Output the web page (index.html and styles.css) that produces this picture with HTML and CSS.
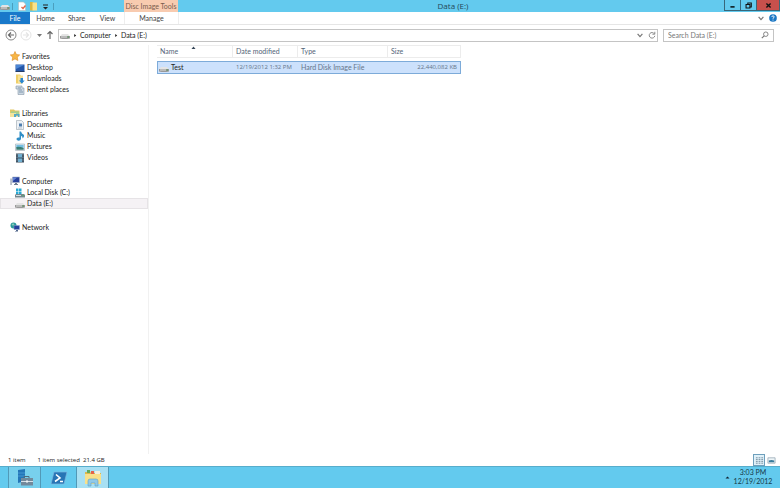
FILE: index.html
```html
<!DOCTYPE html>
<html lang="en">
<head>
<meta charset="utf-8">
<title>Data (E:)</title>
<link rel="stylesheet" href="styles.css">
</head>
<body>
<svg class="defs" aria-hidden="true">
  <symbol id="drive" viewBox="0 0 10 10"><path d="M2 4h6l2 2.500H0z" fill="#e4e4e4"/><path d="M0 6h10v2.500q-5 1-10 0z" fill="#999"/><path d="M1 6.500h6v1H1z" fill="#ddd"/><path d="M7.500 6.500h1.500v1h-1.500z" fill="#4a9a50"/></symbol>
  <symbol id="star" viewBox="0 0 10 10"><path d="M5 .5l1.400 3 3.300.4-2.400 2.300.6 3.300L5 7.900 2.100 9.500l.6-3.300L.3 3.900l3.300-.4z" fill="#f7b646" stroke="#dc8b27" stroke-width=".6"/></symbol>
  <symbol id="desktop" viewBox="0 0 10 10"><path d="M.5 1.500h9v7h-9z" fill="#2456a8"/><path d="M1 2h8L1 6z" fill="#4c87d6"/><path d="M.5 8h9v1h-9z" fill="#253c65"/></symbol>
  <symbol id="downloads" viewBox="0 0 10 10"><path d="M1 .5h4l1 1v8H1z" fill="#f0cf68"/><path d="M3 1.500h5v8H3z" fill="#f8e298"/><path d="M5.500 4h2.500v2.500h1.700L6.800 9.700 4 6.500h1.500z" fill="#2a86cf"/></symbol>
  <symbol id="recent" viewBox="0 0 10 10"><path d="M1 1h6v2h2v6.500H3V4H1z" fill="#cbd7e2" stroke="#8797a7" stroke-width=".6"/><path d="M3 3h3M4 5h3M4 7h4" stroke="#667e98" stroke-width=".7"/></symbol>
  <symbol id="libraries" viewBox="0 0 10 10"><path d="M0 1.500h4l1 1h4.500v6H0z" fill="#e1c866"/><path d="M1 3.500h8v3H1z" fill="#a5cf93"/><path d="M0 5h6v4H0z" fill="#f5e49c"/><path d="M4 9V6h5.500v3H8V7.500H6V9z" fill="#55a9ca"/></symbol>
  <symbol id="documents" viewBox="0 0 10 10"><path d="M1.500.5h5l2 2v7h-7z" fill="#edf1f5" stroke="#98a4ad" stroke-width=".6"/><path d="M4 3.500h3v3H4z" fill="#4f7eae"/><path d="M3 8h4" stroke="#91a3b4" stroke-width=".6"/></symbol>
  <symbol id="music" viewBox="0 0 10 10"><path d="M4.500.5h1.500Q6.500 2.500 9 4 9.500 6.500 7.500 7.500q.5-2-1.500-2.700V8Q5.500 9.800 3.500 9.700 1 9.200 1.500 7.500 2.500 6 4.500 6.500z" fill="#318fc7"/></symbol>
  <symbol id="pictures" viewBox="0 0 10 10"><path d="M.5 2h9v6.500h-9z" fill="#f3f6f7" stroke="#98a8b1" stroke-width=".6"/><path d="M1.300 2.800h7.400v3H1.300z" fill="#75bfe2"/><path d="M1.300 5q3-1 7.400 1v1.800H1.300z" fill="#397d72"/></symbol>
  <symbol id="videos" viewBox="0 0 10 10"><path d="M1 .5h8v9H1z" fill="#384c5d"/><path d="M3 1h4v3.500H3zM3 5.500h4V9H3z" fill="#70afd1"/><path d="M2 1v8M8 1v8" stroke="#c3cdd4" stroke-width=".7" stroke-dasharray=".8 .8"/></symbol>
  <symbol id="computer" viewBox="0 0 10 10"><path d="M.3 2.500h1.500V9H.3z" fill="#a4aebc"/><path d="M2.500 1h7v5.500h-7z" fill="#263f9b" stroke="#a6b2c8" stroke-width=".6"/><path d="M3 1.500h4L3 5z" fill="#6585d6"/><path d="M5 7h2v1h1v1H4V8h1z" fill="#6f7d90"/></symbol>
  <symbol id="sysdrive" viewBox="0 0 10 10"><path d="M1 .5h2.500V3H1zM4 .5h2.500V3H4zM1 3.500h2.500V6H1zM4 3.500h2.500V6H4z" fill="#27a9d4"/><path d="M1 6h8l1 1v2.500H0V7z" fill="#75878f"/><path d="M1 7h5v1H1z" fill="#d4dfe2"/><path d="M7.500 7h1.500v1h-1.500z" fill="#5ab260"/></symbol>
  <symbol id="network" viewBox="0 0 10 10"><circle cx="3.500" cy="3.500" r="3" fill="#2b9a9b"/><path d="M1.500 2q2-1 3 0L3 4z" fill="#8bd0bb"/><path d="M4 3.500h5.500v4H4z" fill="#243f9c" stroke="#8fa3ca" stroke-width=".5"/><path d="M6 8h2v1.500H5V9h1z" fill="#52688c"/></symbol>
  <symbol id="down" viewBox="0 0 10 10"><path d="M2 3.500l3 3.500 3-3.500" fill="none" stroke="#777" stroke-width="1.500"/></symbol>
  <symbol id="right" viewBox="0 0 10 10"><path d="M3 1l5 4-5 4z" fill="#222"/></symbol>
</svg>

<div class="window">
  <header class="titlebar">
    <div class="quick">
      <svg class="icon"><use href="#drive"/></svg>
      <span class="rule"></span>
      <button aria-label="Properties"><svg class="icon" viewBox="0 0 10 10"><path d="M1.500 1h5l2 2v6.500h-7z" fill="#fff" stroke="#b0b9be" stroke-width=".6"/><path d="M4.500 6l1.500 1.500L8.500 4.500" fill="none" stroke="#e1684a" stroke-width="1.400"/></svg></button>
      <button aria-label="New folder"><svg class="icon" viewBox="0 0 10 10"><path d="M1 1h3l1 1v7.500H1z" fill="#d9b843"/><path d="M3.500 1.500h4.500v8H3.500z" fill="#fae28a"/></svg></button>
      <button aria-label="Customize toolbar"><svg class="icon" viewBox="0 0 10 10"><path d="M2 3.500h5v1H2zM2 6h5L4.500 8.500z" fill="#222"/></svg></button>
      <span class="rule"></span>
    </div>
    <div class="context">Disc Image Tools</div>
    <h1>Data (E:)</h1>
    <div class="controls">
      <button aria-label="Minimize"><svg viewBox="0 0 10 10"><path d="M2 6h6v2H2z"/></svg></button>
      <button aria-label="Restore"><svg viewBox="0 0 10 10"><path d="M4 3V1.500h5V7H7M1.500 3.500H7v5H1.500z" fill="none" stroke="#111" stroke-width="1.500"/></svg></button>
      <button class="close" aria-label="Close"><svg viewBox="0 0 10 10"><path d="M2 2l6 6M8 2L2 8" stroke="#111" stroke-width="2"/></svg></button>
    </div>
  </header>

  <nav class="tabs" aria-label="Ribbon">
    <button class="file">File</button>
    <button>Home</button>
    <button>Share</button>
    <button>View</button>
    <button class="manage">Manage</button>
    <span class="grow"></span>
    <button class="mini" aria-label="Expand ribbon"><svg class="glyph"><use href="#down"/></svg></button>
    <button class="mini" aria-label="Help"><svg class="help" viewBox="0 0 10 10"><circle cx="5" cy="5" r="4.800" fill="#1c78c4"/><path d="M3.500 3.800Q3.600 2.300 5 2.300T6.500 3.700Q6.500 4.500 5 5.300V6M5 7v1.200" fill="none" stroke="#fff" stroke-width="1.100"/></svg></button>
  </nav>

  <div class="addressbar">
    <button class="arrow" aria-label="Back"><svg viewBox="0 0 12 12"><circle cx="6" cy="6" r="5" fill="#fff" stroke="#888"/><path d="M9 6H3.500M6 3.500L3.500 6 6 8.500" fill="none" stroke="#666" stroke-width="1.200"/></svg></button>
    <button class="arrow forward" aria-label="Forward"><svg viewBox="0 0 12 12"><circle cx="6" cy="6" r="5" fill="#fff" stroke="#e4e4e4"/><path d="M3 6h5.500M6 3.500L8.500 6 6 8.500" fill="none" stroke="#e4e4e4" stroke-width="1.200"/></svg></button>
    <button class="arrow slim" aria-label="Recent locations"><svg viewBox="0 0 12 12"><path d="M4 5h5L6.500 8z" fill="#777"/></svg></button>
    <button class="arrow" aria-label="Up"><svg viewBox="0 0 12 12"><path d="M6 10V2.500M3.500 5L6 2.500 8.500 5" fill="none" stroke="#666" stroke-width="1.200"/></svg></button>
    <div class="path">
      <svg class="icon"><use href="#drive"/></svg>
      <svg class="chevron"><use href="#right"/></svg>
      <a href="#computer">Computer</a>
      <svg class="chevron"><use href="#right"/></svg>
      <a href="#data">Data (E:)</a>
      <span class="grow"></span>
      <button class="mini" aria-label="Previous locations"><svg class="glyph"><use href="#down"/></svg></button>
      <button class="mini" aria-label="Refresh"><svg class="glyph" viewBox="0 0 10 10"><path d="M8 3.500A3.500 3.500 0 1 0 8.500 6M8.500 1v3h-3" fill="none" stroke="#888" stroke-width="1.200"/></svg></button>
    </div>
    <div class="search">
      <input type="search" aria-label="Search Data (E:)" placeholder="Search Data (E:)">
      <svg class="glyph" viewBox="0 0 10 10"><circle cx="6" cy="4" r="2.800" fill="none" stroke="#777" stroke-width="1.100"/><path d="M4 6L1 9" stroke="#777" stroke-width="1.400"/></svg>
    </div>
  </div>

  <div class="body">
    <nav class="tree" aria-label="Folders">
      <section>
        <a class="head" href="#fav"><svg class="icon"><use href="#star"/></svg>Favorites</a>
        <a href="#desk"><svg class="icon"><use href="#desktop"/></svg>Desktop</a>
        <a href="#down"><svg class="icon"><use href="#downloads"/></svg>Downloads</a>
        <a href="#rec"><svg class="icon"><use href="#recent"/></svg>Recent places</a>
      </section>
      <section>
        <a class="head" href="#lib"><svg class="icon"><use href="#libraries"/></svg>Libraries</a>
        <a href="#doc"><svg class="icon"><use href="#documents"/></svg>Documents</a>
        <a href="#mus"><svg class="icon"><use href="#music"/></svg>Music</a>
        <a href="#pic"><svg class="icon"><use href="#pictures"/></svg>Pictures</a>
        <a href="#vid"><svg class="icon"><use href="#videos"/></svg>Videos</a>
      </section>
      <section>
        <a class="head" href="#comp"><svg class="icon"><use href="#computer"/></svg>Computer</a>
        <a href="#c"><svg class="icon"><use href="#sysdrive"/></svg>Local Disk (C:)</a>
        <a class="current" href="#e"><svg class="icon"><use href="#drive"/></svg>Data (E:)</a>
      </section>
      <section>
        <a class="head" href="#net"><svg class="icon"><use href="#network"/></svg>Network</a>
      </section>
    </nav>
    <main>
      <table>
        <colgroup><col class="c-name"><col class="c-date"><col class="c-type"><col class="c-size"></colgroup>
        <thead><tr><th class="sorted">Name<svg class="sort" viewBox="0 0 10 6"><path d="M1 6l4-5 4 5z" fill="#345"/></svg></th><th>Date modified</th><th>Type</th><th>Size</th></tr></thead>
        <tbody><tr><td class="name"><div><svg class="icon"><use href="#drive"/></svg>Test</div></td><td class="num">12/19/2012 1:32 PM</td><td>Hard Disk Image File</td><td class="num size">22,440,082 KB</td></tr></tbody>
      </table>
    </main>
  </div>

  <footer class="status">
    <span>1 item</span><span>1 item selected&nbsp; 21.4 GB</span>
    <span class="grow"></span>
    <button class="view on" aria-label="Details view"><svg viewBox="0 0 10 10"><path d="M1 2h2M1 4h2M1 6h2M1 8h2M4 2h2M4 4h2M4 6h2M4 8h2M7 2h2M7 4h2M7 6h2M7 8h2" stroke="#71899b" stroke-width="1"/></svg></button>
    <button class="view" aria-label="Large icons view"><svg viewBox="0 0 10 10"><path d="M1 2h8v6H1z" fill="#eef5f8" stroke="#8ea2ae" stroke-width=".8"/><path d="M2 5q3-1 6 0v2H2z" fill="#397c9b"/></svg></button>
  </footer>
</div>

<div class="taskbar">
  <button class="task" aria-label="Server Manager"><svg viewBox="0 0 18 18"><path d="M2 1l7-1v12l-7 2z" fill="#2376b8"/><path d="M2 4h7M2 7h7" stroke="#55a6dc" stroke-width=".7"/><path d="M8 9V7.500h5V9" fill="none" stroke="#4f6a7d"/><path d="M5 9h12v7.500H5z" fill="#72899b"/><path d="M5 12.500h12" stroke="#d5e1e8"/><path d="M10 11.500h2v2h-2z" fill="#eef3f6"/></svg></button>
  <button class="task plain" aria-label="PowerShell"><svg viewBox="0 0 18 18"><path d="M4 3h13l-3 12H1z" fill="#2775b5" stroke="#7db8df" stroke-width=".7"/><path d="M6 5.500L10 9l-5 3.500M10 12.500h3" fill="none" stroke="#fff" stroke-width="1.600"/></svg></button>
  <button class="task active" aria-label="File Explorer"><svg viewBox="0 0 18 18"><path d="M1 3h5l1 1h10v11H1z" fill="#dcb84f"/><path d="M3 1h3v3H3z" fill="#62a95c"/><path d="M7 2h3v3H7z" fill="#e4624a"/><path d="M11 2h5v3h-5z" fill="#f3efe0"/><path d="M1 5h16v10H1z" fill="#f8e08b"/><path d="M4 17v-5q0-2 2-2h6q2 0 2 2v5h-3v-3H7v3z" fill="#8fc9e8" stroke="#5b9fc7" stroke-width=".6"/></svg></button>
  <span class="grow"></span>
  <button class="tray" aria-label="Show hidden icons"><svg viewBox="0 0 10 10"><path d="M1 7l4-4 4 4z" fill="#123"/></svg></button>
  <time datetime="2012-12-19T15:03">3:03 PM<br>12/19/2012</time>
</div>
</body>
</html>
```
FILE: styles.css
```css
* { box-sizing: border-box; }
body {
  margin: 0;
  min-height: 100vh;
  display: flex;
  flex-direction: column;
  background: #fff;
  color: #222;
  font: 7px/11px Lato, "Open Sans", sans-serif;
}
button {
  display: flex;
  align-items: center;
  justify-content: center;
  padding: 0;
  border: 0;
  background: none;
  color: inherit;
  font: inherit;
}
a { color: inherit; text-decoration: none; }
svg { display: block; flex: none; }
.defs { position: absolute; width: 0; height: 0; }
.icon { width: 10px; height: 10px; }
.glyph { width: 8px; height: 8px; }
.grow { flex: 1; }
.window { flex: 1; display: flex; flex-direction: column; }

.titlebar {
  display: grid;
  grid-template-columns: 124px 54px 1fr 56px;
  height: 12px;
  background: #63caee;
}
.quick { display: flex; align-items: center; gap: 2px; }
.quick .rule { width: 1px; height: 7px; background: #4b9fbe; }
.quick .rule:first-of-type { margin-right: 2px; }
.context {
  background: #f8cbb0;
  color: #795c4e;
  line-height: 12px;
  text-align: center;
  white-space: nowrap;
}
h1 {
  margin: 0;
  padding-left: 4px;
  color: #234958;
  font: 8px/12px "Open Sans", sans-serif;
  text-align: center;
}
.controls { display: flex; height: 11px; border: 1px solid #38677a; border-top: 0; }
.controls button { width: 16px; border-right: 1px solid #38677a; }
.controls .close { flex: 1; border: 0; background: #c7504c; }
.controls svg { width: 7px; height: 7px; }

.tabs {
  display: flex;
  height: 13px;
  padding-right: 1px;
  border-bottom: 1px solid #e6e6e6;
  color: #444;
}
.tabs button { width: 31px; }
.tabs .file { width: 30px; background: #1979ca; color: #fff; }
.tabs .manage {
  width: 55px;
  margin-left: 1px;
  border: 1px solid #eee;
  border-width: 0 1px;
}
.tabs .mini { width: 12px; }
.help { width: 8px; height: 8px; }

.addressbar {
  display: flex;
  align-items: center;
  height: 20px;
  padding: 0 6px 0 4px;
}
.arrow { width: 13px; }
.arrow.forward { width: 18px; }
.arrow.slim { width: 8px; }
.arrow svg { width: 12px; height: 12px; }
.path, .search {
  display: flex;
  align-items: center;
  height: 13px;
  border: 1px solid #c4c4c4;
}
.path { flex: 1; margin: 0 5px 0 2px; padding: 0 1px; gap: 3px; }
.path .mini { width: 9px; }
.chevron { width: 4px; height: 5px; }
.search { width: 111px; padding: 0 4px; }
.search input {
  flex: 1;
  min-width: 0;
  padding: 0;
  border: 0;
  outline: 0;
  background: none;
  font: inherit;
}
.search input::placeholder { color: #777; opacity: 1; }

.body { flex: 1; display: grid; grid-template-columns: 149px 1fr; }
.tree { padding-top: 5px; border-right: 1px solid #f1f1f1; }
.tree section { margin-bottom: 12px; }
.tree a {
  display: flex;
  align-items: center;
  gap: 2px;
  height: 11px;
  padding-left: 15px;
}
.tree .head { height: 12px; padding-left: 10px; }
.tree .current { background: #f5f2f5; outline: 1px solid #e6e3e6; outline-offset: -1px; }

main { padding-left: 8px; }
table {
  width: 304px;
  border-spacing: 0;
  table-layout: fixed;
  line-height: 11px;
}
.c-name { width: 76px; }
.c-date { width: 65px; }
.c-type { width: 90px; }
.c-size { width: 73px; }
th, td { height: 13px; padding: 0 3px; font-weight: 400; text-align: left; white-space: nowrap; }
th {
  position: relative;
  border: 1px solid #ececec;
  border-width: 1px 1px 1px 0;
  color: #536478;
}
.sort { position: absolute; top: 0; right: 36px; width: 5px; height: 3px; }
thead::after { content: ""; display: block; height: 3px; }
td {
  border: 1px solid #7dabd9;
  border-width: 1px 0;
  background: #cce1fc;
  color: #65758a;
}
.num { font-family: "Open Sans", sans-serif; font-size: 6px; }
.name { border-left-width: 1px; padding-left: 1px; color: #222; }
.name div { display: flex; align-items: center; gap: 2px; height: 11px; }
.size { border-right-width: 1px; text-align: right; }

.status {
  display: flex;
  align-items: center;
  gap: 12px;
  height: 12px;
  padding: 0 3px 0 8px;
  font: 6px/12px "Open Sans", sans-serif;
}
.view { width: 12px; height: 12px; }
.view + .view { margin-left: -12px; }
.view svg { width: 9px; height: 9px; }
.view.on { border: 1px solid #6e9fbc; background: #e0f1f9; }

.taskbar {
  display: flex;
  height: 22px;
  padding: 0 6px 0 8px;
  border-top: 1px solid #57adcb;
  background: #63caee;
  color: #173a48;
}
.task { width: 33px; border: 1px solid #5199b7; border-width: 0 1px; background: #78d0ed; }
.task svg { width: 18px; height: 18px; }
.task.plain { width: 35px; border: 0; background: none; }
.task.active { background: #a8e0f3; }
.tray { width: 10px; }
.tray svg { width: 5px; height: 5px; }
time { width: 42px; padding-top: 1px; line-height: 9px; text-align: center; }
```
